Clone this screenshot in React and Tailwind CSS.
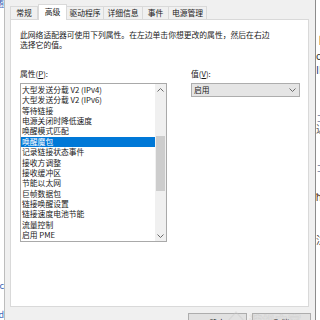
import React from "react";

const items = [
  "大型发送分载 V2 (IPv4)",
  "大型发送分载 V2 (IPv6)",
  "等待链接",
  "电源关闭时降低速度",
  "唤醒模式匹配",
  "唤醒魔包",
  "记录链接状态事件",
  "接收方调整",
  "接收缓冲区",
  "节能以太网",
  "巨帧数据包",
  "链接唤醒设置",
  "链接速度电池节能",
  "流量控制",
  "启用 PME",
];

function Chevron({ up = false, className = "" }) {
  return (
    <svg width="7" height="4" viewBox="0 0 7 4" className={className}>
      <path
        d={up ? "M0.5 3.5 L3.5 0.5 L6.5 3.5" : "M0.5 0.5 L3.5 3.5 L6.5 0.5"}
        fill="none"
        stroke="#6a6a6a"
        strokeWidth="1"
      />
    </svg>
  );
}

function Tab({ label, w, selected = false, first = false }) {
  if (selected) {
    return (
      <div
        className={`${w} h-[16px] bg-white border-l border-t border-r border-[#d9d9d9] flex items-center justify-center leading-none pb-[1px]`}
      >
        {label}
      </div>
    );
  }
  return (
    <div
      className={`${w} h-[13px] mb-[1px] bg-[#f0f0f0] border-t border-r ${first ? "border-l" : ""} border-[#d9d9d9] flex items-center justify-center leading-none`}
    >
      {label}
    </div>
  );
}

export default function App() {
  return (
    <div className="w-[320px] h-[320px] overflow-hidden bg-white flex font-['Noto_Sans_CJK_SC',sans-serif] text-[7.8px] text-[#1a1a1a]">
      {/* left background fragment */}
      <div className="w-[4px] shrink-0 overflow-hidden flex flex-col items-end text-[9px] leading-[10px] text-[#3b63b5]">
        <div className="mt-[-1px] whitespace-nowrap">随</div>
        <div className="mt-[272px] whitespace-nowrap">c</div>
        <div className="mt-[19px] whitespace-nowrap">d</div>
      </div>
      <div className="w-[1px] shrink-0 bg-[#bdbdbd]" />

      {/* dialog */}
      <div className="w-[310px] shrink-0 bg-[#f0f0f0] flex flex-col pl-[5px] pr-[6px] pt-[4px] relative">
        {/* tabs */}
        <div className="h-[16px] shrink-0 flex items-end relative z-10 -mb-px">
          <Tab label="常规" w="w-[28px]" first />
          <Tab label="高级" w="w-[29px]" selected />
          <Tab label="驱动程序" w="w-[37px]" />
          <Tab label="详细信息" w="w-[39px]" />
          <Tab label="事件" w="w-[26px]" />
          <Tab label="电源管理" w="w-[38px]" />
        </div>

        {/* panel */}
        <div className="h-[288px] shrink-0 bg-white border border-[#d9d9d9] flex flex-col pt-[10px] pl-[9px]">
          <div className="leading-[10px]">
            <div>此网络适配器可使用下列属性。在左边单击你想更改的属性，然后在右边</div>
            <div>选择它的值。</div>
          </div>

          <div className="flex mt-[19px]">
            {/* left column */}
            <div className="flex flex-col w-[147px]">
              <div className="leading-[10px]">
                属性(<span className="underline">P</span>):
              </div>
              <div className="mt-[4px] h-[159px] border border-[#a9a9a9] flex">
                <div className="flex-1 flex flex-col pt-[1px]">
                  {items.map((it, i) => (
                    <div
                      key={it}
                      className={`h-[10.36px] leading-[10.36px] pl-[1px] whitespace-nowrap ${
                        i === 5 ? "bg-[#0078d7] text-white" : ""
                      }`}
                    >
                      {it}
                    </div>
                  ))}
                </div>
                <div className="w-[11px] bg-[#f0f0f0] flex flex-col">
                  <div className="h-[11px] flex items-center justify-center">
                    <Chevron up />
                  </div>
                  <div className="flex-1 flex flex-col items-center">
                    <div className="mt-[41px] w-[9px] h-[55px] bg-[#cdcdcd]" />
                  </div>
                  <div className="h-[11px] flex items-center justify-center">
                    <Chevron />
                  </div>
                </div>
              </div>
            </div>

            {/* right column */}
            <div className="flex flex-col ml-[24px]">
              <div className="leading-[10px]">
                值(<span className="underline">V</span>):
              </div>
              <div className="mt-[4px] w-[109px] h-[14px] border border-[#adadad] bg-[#e5e5e5] flex items-center justify-between pl-[2px] pr-[3px]">
                <span className="leading-none">启用</span>
                <Chevron />
              </div>
            </div>
          </div>
        </div>

        {/* buttons */}
        <div className="flex shrink-0 gap-[5px] ml-[178px] mt-[6px]">
          <div className="w-[59px] h-[20px] shrink-0 border border-[#adadad] bg-[#e1e1e1] flex items-center justify-center leading-none">
            确定
          </div>
          <div className="w-[59px] h-[20px] shrink-0 border border-[#adadad] bg-[#e1e1e1] flex items-center justify-center leading-none">
            取消
          </div>
        </div>

        {/* watermark overlay */}
        <div className="absolute left-[222px] top-[310px] flex items-start gap-[4px] opacity-40 pointer-events-none">
          <svg width="18" height="12" viewBox="0 0 18 12">
            <path d="M1 11 L9 2 L17 11" fill="none" stroke="#c9c9c9" strokeWidth="1.2" />
          </svg>
          <span className="text-[13px] leading-[13px] font-bold text-transparent [-webkit-text-stroke:0.6px_#c4c4c4] mt-[3px] whitespace-nowrap">
            装机之家
          </span>
        </div>
      </div>

      <div className="w-[1px] shrink-0 bg-[#8c8c8c]" />
      {/* right background fragment */}
      <div className="w-[4px] shrink-0 overflow-hidden flex flex-col text-[10px] leading-[10px]">
        <div className="mt-[35px] text-[#7a4d24] whitespace-nowrap">卜</div>
        <div className="mt-[6px] text-[#333] whitespace-nowrap">o</div>
        <div className="mt-[4px] text-[#23407a] whitespace-nowrap">II</div>
        <div className="mt-[38px] text-[#6a7ba0] whitespace-nowrap">コ</div>
        <div className="mt-[1px] text-[#555] whitespace-nowrap">込</div>
        <div className="mt-[29px] text-[#6a7ba0] whitespace-nowrap">コ</div>
        <div className="mt-[19px] text-[#5a3a1a] whitespace-nowrap">ħ</div>
        <div className="mt-[33px] text-[#333] whitespace-nowrap">汸</div>
      </div>
    </div>
  );
}
